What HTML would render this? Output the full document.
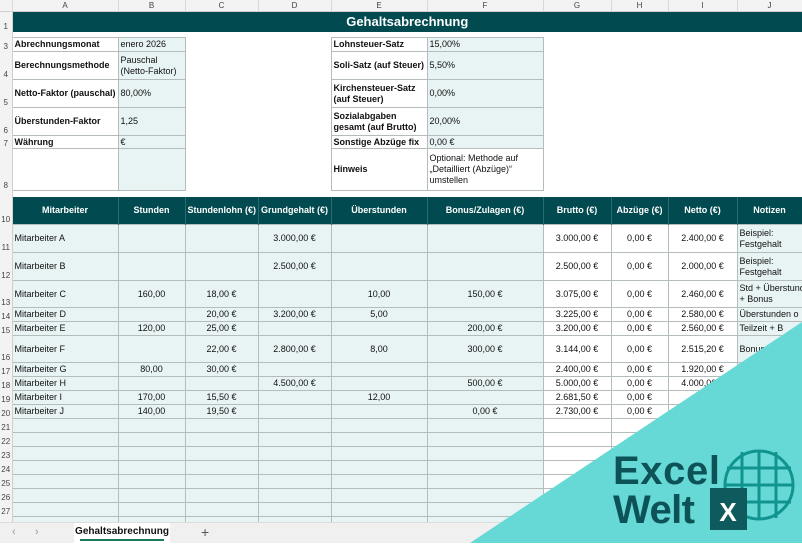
<!DOCTYPE html>
<html><head><meta charset="utf-8"><style>
*{margin:0;padding:0;box-sizing:border-box}
body{width:802px;height:543px;overflow:hidden;background:#fff;font-family:"Liberation Sans",Arial,sans-serif;font-size:9px;color:#111;position:relative}
table{border-collapse:collapse;table-layout:fixed;position:absolute;left:0;top:0;width:802px}
td{overflow:hidden;white-space:nowrap;padding:0 2px;line-height:11px;vertical-align:middle}
.rh{color:#444;font-size:8px;text-align:center;vertical-align:bottom;background:#f3f3f3;border-right:1px solid #d0d0d0;padding:0}
.ch td{background:#f3f3f3;color:#444;font-size:8px;text-align:center;border-right:1px solid #d8d8d8;border-bottom:1px solid #d0d0d0}
.b{border:1px solid #b4bcbc}
.f{background:#e8f3f4}
.bo{font-weight:bold}
.h td.x{background:#004a50;color:#fff;font-weight:bold;text-align:center;border-right:1px solid #2a6b70}
.r{text-align:center}
</style></head><body>
<table>
<colgroup><col style="width:12px"><col style="width:106px"><col style="width:67px"><col style="width:73px"><col style="width:73px"><col style="width:96px"><col style="width:116px"><col style="width:68px"><col style="width:57px"><col style="width:69px"><col style="width:65px"></colgroup>
<tr class="ch" style="height:11px"><td></td><td>A</td><td>B</td><td>C</td><td>D</td><td>E</td><td>F</td><td>G</td><td>H</td><td>I</td><td>J</td></tr>
<tr style="height:20px"><td class="rh">1</td><td colspan="10" style="background:#004a50;color:#fff;font-weight:bold;font-size:13px;text-align:center">Gehaltsabrechnung</td></tr>
<tr style="height:6px"><td class="rh"></td><td colspan="10"></td></tr>
<tr style="height:14px"><td class="rh">3</td><td class="b bo">Abrechnungsmonat</td><td class="b f">enero 2026</td><td></td><td></td><td class="b bo">Lohnsteuer-Satz</td><td class="b f">15,00%</td><td colspan="4"></td></tr>
<tr style="height:28px"><td class="rh">4</td><td class="b bo">Berechnungsmethode</td><td class="b f">Pauschal<br>(Netto-Faktor)</td><td></td><td></td><td class="b bo">Soli-Satz (auf Steuer)</td><td class="b f">5,50%</td><td colspan="4"></td></tr>
<tr style="height:28px"><td class="rh">5</td><td class="b bo">Netto-Faktor (pauschal)</td><td class="b f">80,00%</td><td></td><td></td><td class="b bo">Kirchensteuer-Satz<br>(auf Steuer)</td><td class="b f">0,00%</td><td colspan="4"></td></tr>
<tr style="height:28px"><td class="rh">6</td><td class="b bo">Überstunden-Faktor</td><td class="b f">1,25</td><td></td><td></td><td class="b bo">Sozialabgaben<br>gesamt (auf Brutto)</td><td class="b f">20,00%</td><td colspan="4"></td></tr>
<tr style="height:13px"><td class="rh">7</td><td class="b bo">Währung</td><td class="b f">€</td><td></td><td></td><td class="b bo">Sonstige Abzüge fix</td><td class="b f">0,00 €</td><td colspan="4"></td></tr>
<tr style="height:42px"><td class="rh">8</td><td class="b"></td><td class="b f"></td><td></td><td></td><td class="b bo">Hinweis</td><td class="b">Optional: Methode auf<br>„Detailliert (Abzüge)“<br>umstellen</td><td colspan="4"></td></tr>
<tr style="height:6px"><td class="rh"></td><td colspan="10"></td></tr>
<tr class="h" style="height:28px"><td class="rh">10</td><td class="x">Mitarbeiter</td><td class="x">Stunden</td><td class="x">Stundenlohn (€)</td><td class="x">Grundgehalt (€)</td><td class="x">Überstunden</td><td class="x">Bonus/Zulagen (€)</td><td class="x">Brutto (€)</td><td class="x">Abzüge (€)</td><td class="x">Netto (€)</td><td class="x">Notizen</td></tr>
<tr style="height:28px"><td class="rh">11</td><td class="b f">Mitarbeiter A</td><td class="b f r"></td><td class="b f r"></td><td class="b f r">3.000,00 €</td><td class="b f r"></td><td class="b f r"></td><td class="b r">3.000,00 €</td><td class="b r">0,00 €</td><td class="b r">2.400,00 €</td><td class="b f">Beispiel:<br>Festgehalt</td></tr>
<tr style="height:28px"><td class="rh">12</td><td class="b f">Mitarbeiter B</td><td class="b f r"></td><td class="b f r"></td><td class="b f r">2.500,00 €</td><td class="b f r"></td><td class="b f r"></td><td class="b r">2.500,00 €</td><td class="b r">0,00 €</td><td class="b r">2.000,00 €</td><td class="b f">Beispiel:<br>Festgehalt</td></tr>
<tr style="height:27px"><td class="rh">13</td><td class="b f">Mitarbeiter C</td><td class="b f r">160,00</td><td class="b f r">18,00 €</td><td class="b f r"></td><td class="b f r">10,00</td><td class="b f r">150,00 €</td><td class="b r">3.075,00 €</td><td class="b r">0,00 €</td><td class="b r">2.460,00 €</td><td class="b f">Std + Überstunden<br>+ Bonus</td></tr>
<tr style="height:14px"><td class="rh">14</td><td class="b f">Mitarbeiter D</td><td class="b f r"></td><td class="b f r">20,00 €</td><td class="b f r">3.200,00 €</td><td class="b f r">5,00</td><td class="b f r"></td><td class="b r">3.225,00 €</td><td class="b r">0,00 €</td><td class="b r">2.580,00 €</td><td class="b f">Überstunden o</td></tr>
<tr style="height:14px"><td class="rh">15</td><td class="b f">Mitarbeiter E</td><td class="b f r">120,00</td><td class="b f r">25,00 €</td><td class="b f r"></td><td class="b f r"></td><td class="b f r">200,00 €</td><td class="b r">3.200,00 €</td><td class="b r">0,00 €</td><td class="b r">2.560,00 €</td><td class="b f">Teilzeit + B</td></tr>
<tr style="height:27px"><td class="rh">16</td><td class="b f">Mitarbeiter F</td><td class="b f r"></td><td class="b f r">22,00 €</td><td class="b f r">2.800,00 €</td><td class="b f r">8,00</td><td class="b f r">300,00 €</td><td class="b r">3.144,00 €</td><td class="b r">0,00 €</td><td class="b r">2.515,20 €</td><td class="b f">Bonus</td></tr>
<tr style="height:14px"><td class="rh">17</td><td class="b f">Mitarbeiter G</td><td class="b f r">80,00</td><td class="b f r">30,00 €</td><td class="b f r"></td><td class="b f r"></td><td class="b f r"></td><td class="b r">2.400,00 €</td><td class="b r">0,00 €</td><td class="b r">1.920,00 €</td><td class="b f"></td></tr>
<tr style="height:14px"><td class="rh">18</td><td class="b f">Mitarbeiter H</td><td class="b f r"></td><td class="b f r"></td><td class="b f r">4.500,00 €</td><td class="b f r"></td><td class="b f r">500,00 €</td><td class="b r">5.000,00 €</td><td class="b r">0,00 €</td><td class="b r">4.000,00 €</td><td class="b f"></td></tr>
<tr style="height:14px"><td class="rh">19</td><td class="b f">Mitarbeiter I</td><td class="b f r">170,00</td><td class="b f r">15,50 €</td><td class="b f r"></td><td class="b f r">12,00</td><td class="b f r"></td><td class="b r">2.681,50 €</td><td class="b r">0,00 €</td><td class="b r"></td><td class="b f"></td></tr>
<tr style="height:14px"><td class="rh">20</td><td class="b f">Mitarbeiter J</td><td class="b f r">140,00</td><td class="b f r">19,50 €</td><td class="b f r"></td><td class="b f r"></td><td class="b f r">0,00 €</td><td class="b r">2.730,00 €</td><td class="b r">0,00 €</td><td class="b r"></td><td class="b f"></td></tr>
<tr style="height:14px"><td class="rh">21</td><td class="b f"></td><td class="b f"></td><td class="b f"></td><td class="b f"></td><td class="b f"></td><td class="b f"></td><td class="b"></td><td class="b"></td><td class="b"></td><td class="b f"></td></tr>
<tr style="height:14px"><td class="rh">22</td><td class="b f"></td><td class="b f"></td><td class="b f"></td><td class="b f"></td><td class="b f"></td><td class="b f"></td><td class="b"></td><td class="b"></td><td class="b"></td><td class="b f"></td></tr>
<tr style="height:14px"><td class="rh">23</td><td class="b f"></td><td class="b f"></td><td class="b f"></td><td class="b f"></td><td class="b f"></td><td class="b f"></td><td class="b"></td><td class="b"></td><td class="b"></td><td class="b f"></td></tr>
<tr style="height:14px"><td class="rh">24</td><td class="b f"></td><td class="b f"></td><td class="b f"></td><td class="b f"></td><td class="b f"></td><td class="b f"></td><td class="b"></td><td class="b"></td><td class="b"></td><td class="b f"></td></tr>
<tr style="height:14px"><td class="rh">25</td><td class="b f"></td><td class="b f"></td><td class="b f"></td><td class="b f"></td><td class="b f"></td><td class="b f"></td><td class="b"></td><td class="b"></td><td class="b"></td><td class="b f"></td></tr>
<tr style="height:14px"><td class="rh">26</td><td class="b f"></td><td class="b f"></td><td class="b f"></td><td class="b f"></td><td class="b f"></td><td class="b f"></td><td class="b"></td><td class="b"></td><td class="b"></td><td class="b f"></td></tr>
<tr style="height:14px"><td class="rh">27</td><td class="b f"></td><td class="b f"></td><td class="b f"></td><td class="b f"></td><td class="b f"></td><td class="b f"></td><td class="b"></td><td class="b"></td><td class="b"></td><td class="b f"></td></tr>
<tr style="height:14px"><td class="rh">28</td><td class="b f"></td><td class="b f"></td><td class="b f"></td><td class="b f"></td><td class="b f"></td><td class="b f"></td><td class="b"></td><td class="b"></td><td class="b"></td><td class="b f"></td></tr>
</table>
<div style="position:absolute;left:0;top:522px;width:802px;height:21px;background:#f0f0f0;border-top:1px solid #ddd">
<span style="position:absolute;left:12px;top:3px;color:#999;font-size:11px">&lsaquo;</span>
<span style="position:absolute;left:35px;top:3px;color:#999;font-size:11px">&rsaquo;</span>
<div style="position:absolute;left:74px;top:0;width:96px;height:21px;background:#fff;font-weight:bold;font-size:10px;text-align:center;line-height:17px">Gehaltsabrechnung<div style="position:absolute;left:6px;right:6px;top:16px;height:2px;background:#1e7a5a"></div></div>
<span style="position:absolute;left:201px;top:1px;color:#555;font-size:14px">+</span>
</div>
<svg style="position:absolute;left:0;top:0" width="802" height="543">
<polygon points="802,322 470,543 802,543" fill="#66d9d6"/>
<text x="613" y="484" font-family="Liberation Sans,sans-serif" font-weight="bold" font-size="40" fill="#0d5257" textLength="107">Excel</text>
<text x="613" y="523" font-family="Liberation Sans,sans-serif" font-weight="bold" font-size="40" fill="#0d5257" textLength="82">Welt</text>
<g fill="none" stroke="#119490" stroke-width="3">
<circle cx="759" cy="485" r="34"/>
<line x1="742" y1="452" x2="742" y2="518"/><line x1="759" y1="451" x2="759" y2="519"/><line x1="776" y1="452" x2="776" y2="518"/>
<line x1="727" y1="468" x2="791" y2="468"/><line x1="725" y1="485" x2="793" y2="485"/><line x1="727" y1="502" x2="791" y2="502"/>
</g>
<rect x="710" y="488" width="37" height="42" fill="#0f5a5c"/>
<text x="728" y="521" text-anchor="middle" font-family="Liberation Sans,sans-serif" font-weight="bold" font-size="26" fill="#fff">X</text>
</svg>
</body></html>
